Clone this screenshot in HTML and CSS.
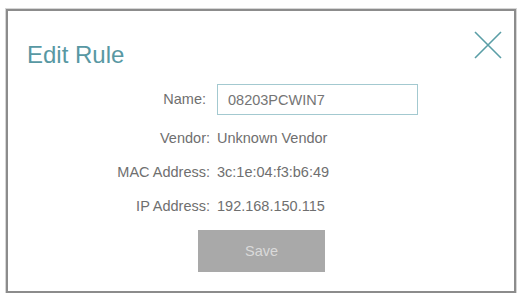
FILE: index.html
```html
<!DOCTYPE HTML>
<html lang="en-US">
<head>
<meta charset="utf-8">
<title>Edit Rule</title>
<link rel="stylesheet" href="styles.css">
</head>
<body>
  <div class="dialog">
    <div class="dialog-head">
      <h1>Edit Rule</h1>
      <button class="close" type="button" title="Close">
        <svg width="28" height="28" viewBox="0 0 28 28">
          <path d="M1 1 L27 27 M27 1 L1 27" stroke="#5a9ea6" stroke-width="1.6" fill="none"/>
        </svg>
      </button>
    </div>
    <form class="rule-form">
      <div class="row row-name">
        <label for="name">Name:</label>
        <input type="text" id="name" value="08203PCWIN7" />
      </div>
      <div class="row">
        <span class="label">Vendor:</span>
        <span class="value">Unknown Vendor</span>
      </div>
      <div class="row">
        <span class="label">MAC Address:</span>
        <span class="value">3c:1e:04:f3:b6:49</span>
      </div>
      <div class="row">
        <span class="label">IP Address:</span>
        <span class="value">192.168.150.115</span>
      </div>
      <input type="submit" class="save" value="Save" disabled />
    </form>
  </div>
</body>
</html>
```

FILE: styles.css
```css
* {
	box-sizing: border-box;
}
body {
	margin: 0;
	padding: 9px 0 0 6px;
	background: #fff;
	font: 14.5px/21px "Liberation Sans", Arial, sans-serif;
	color: #6f6f6f;
}
.dialog {
	width: 510px;
	height: 284px;
	border: 2px solid #8c8c8c;
	box-shadow: 0 0 0 1px #d6d6d6;
	background: #fff;
}
.dialog-head {
	display: flex;
	justify-content: space-between;
	align-items: flex-start;
	padding: 0 12px 0 19px;
}
h1 {
	margin: 30px 0 0;
	font-size: 24px;
	line-height: 28px;
	font-weight: normal;
	color: #5898a3;
}
.close {
	margin-top: 20px;
	padding: 0;
	border: 0;
	background: none;
	line-height: 0;
}

.rule-form {
	margin-top: 15px;
	display: flex;
	flex-direction: column;
	gap: 13px;
}
.row {
	display: flex;
	align-items: center;
}
.row label, .row .label {
	width: 202px;
	margin-right: 7px;
	text-align: right;
}
.row-name label { padding-right: 4px; }
.row input {
	width: 201px;
	height: 31px;
	padding: 0 10px;
	border: 1px solid #a3c9d0;
	color: #757575;
	font: 14.5px "Liberation Sans", Arial, sans-serif;
	outline: none;
}
.save {
	align-self: center;
	margin-left: 1px;
	width: 127px;
	height: 42px;
	border: 0;
	background: #a9a9a9;
	color: #dadada;
	font: 14.5px "Liberation Sans", Arial, sans-serif;
}
```
